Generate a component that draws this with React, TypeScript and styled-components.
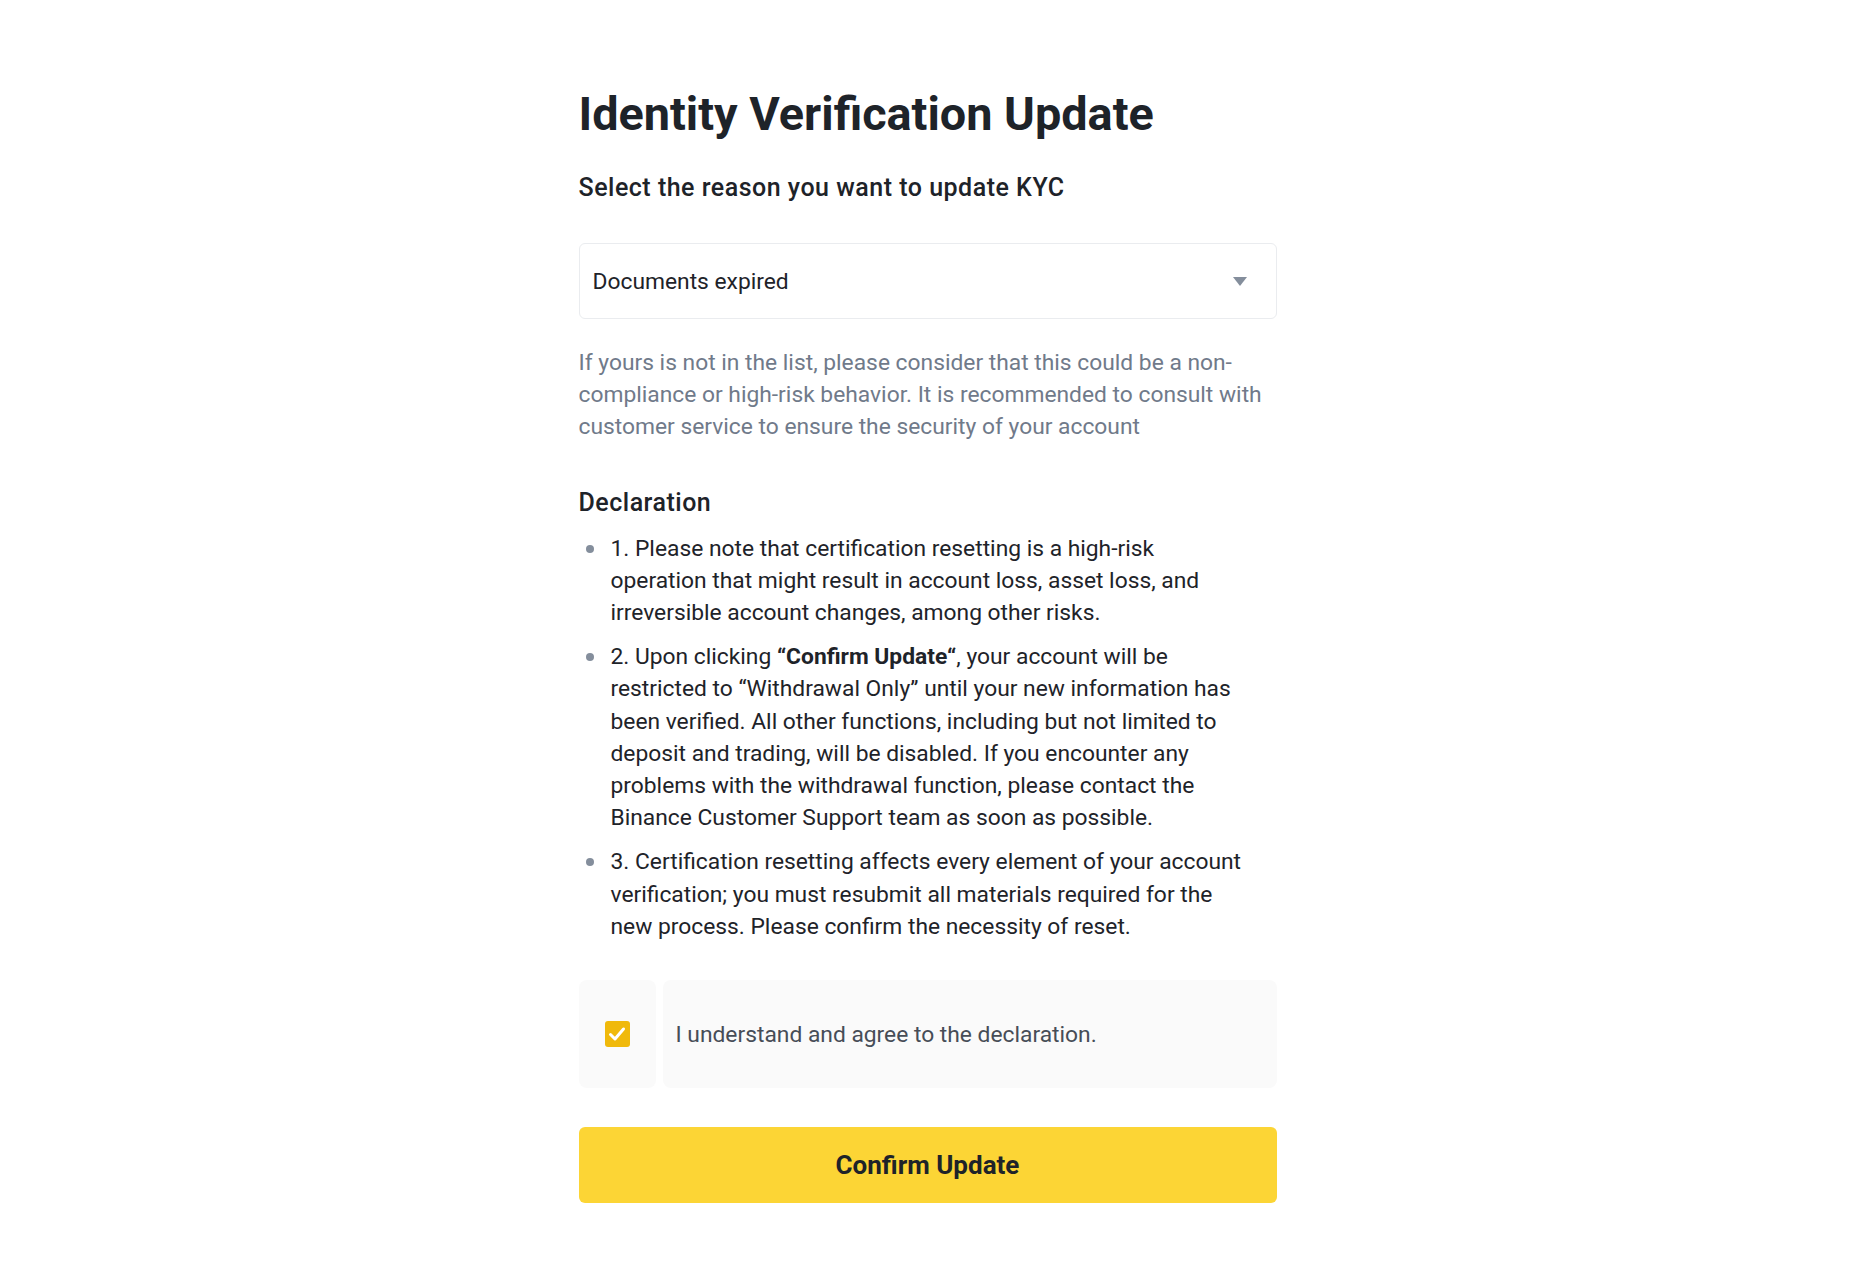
import React from "react";
import styled, { createGlobalStyle } from "styled-components";

const Global = createGlobalStyle`
  html, body { margin: 0; padding: 0; background: #ffffff; }
  body { font-family: Roboto, "Noto Sans", "Liberation Sans", sans-serif; color: #1E2329; }
`;

const Page = styled.div`
  display: flex;
  justify-content: center;
  padding: 86px 15px 60px 0;
`;

const Column = styled.div`
  width: 698px;
  display: flex;
  flex-direction: column;
`;

const Title = styled.h1`
  margin: 0;
  font-size: 46.8px;
  line-height: 56px;
  font-weight: 700;
  color: #1E2329;
`;

const Subtitle = styled.h2`
  margin: 30px 0 0;
  font-size: 25px;
  line-height: 32px;
  font-weight: 500;
  letter-spacing: 0.5px;
  color: #1E2329;
`;

const SelectBox = styled.div`
  margin-top: 39px;
  height: 76px;
  box-sizing: border-box;
  border: 1px solid #EAECEF;
  border-radius: 6px;
  display: flex;
  align-items: center;
  justify-content: space-between;
  padding: 0 29px 0 13px;
  font-size: 22.8px;
  color: #1E2329;
`;

const Hint = styled.p`
  margin: 28px 0 0;
  font-size: 22.8px;
  line-height: 32.2px;
  color: #707A8A;
`;

const SectionTitle = styled.h3`
  margin: 43px 0 0;
  font-size: 25px;
  line-height: 32px;
  font-weight: 500;
  letter-spacing: 0.5px;
  color: #1E2329;
`;

const List = styled.ul`
  margin: 14px 0 0;
  padding: 0;
  list-style: none;
  display: flex;
  flex-direction: column;
  gap: 12px;
`;

const Item = styled.li`
  position: relative;
  padding-left: 32px;
  padding-right: 28px;
  font-size: 22.8px;
  line-height: 32.2px;
  color: #1E2329;
  &::before {
    content: "";
    position: absolute;
    left: 7px;
    top: 12px;
    width: 8px;
    height: 8px;
    border-radius: 50%;
    background: #848E9C;
  }
`;

const Agree = styled.label`
  margin-top: 37px;
  display: flex;
  gap: 7px;
  height: 108px;
  cursor: pointer;
`;

const CheckCell = styled.div`
  width: 77px;
  flex: none;
  background: #FAFAFA;
  border-radius: 8px;
  display: flex;
  align-items: center;
  justify-content: center;
`;

const CheckBox = styled.span`
  width: 25px;
  height: 26px;
  border-radius: 3px;
  background: #F0B90B;
  display: flex;
  align-items: center;
  justify-content: center;
`;

const AgreeText = styled.div`
  flex: 1;
  background: #FAFAFA;
  border-radius: 8px;
  display: flex;
  align-items: center;
  padding-left: 13px;
  font-size: 22.8px;
  color: #474D57;
`;

const Button = styled.button`
  margin-top: 39px;
  height: 76px;
  border: none;
  border-radius: 6px;
  background: #FCD535;
  font-family: inherit;
  font-size: 26px;
  font-weight: 700;
  color: #1E2329;
  cursor: pointer;
`;

export default function App() {
  return (
    <>
      <Global />
      <Page>
        <Column>
          <Title>Identity Verification Update</Title>
          <Subtitle>Select the reason you want to update KYC</Subtitle>
          <SelectBox>
            <span>Documents expired</span>
            <svg width="14" height="9" viewBox="0 0 14 9">
              <path d="M0 0H14L7 9Z" fill="#848E9C" />
            </svg>
          </SelectBox>
          <Hint>
            If yours is not in the list, please consider that this could be a non-compliance or high-risk
            behavior. It is recommended to consult with customer service to ensure the security of your account
          </Hint>
          <SectionTitle>Declaration</SectionTitle>
          <List>
            <Item>
              1. Please note that certification resetting is a high-risk operation that might result in account
              loss, asset loss, and irreversible account changes, among other risks.
            </Item>
            <Item>
              2. Upon clicking <b>“Confirm Update“</b>, your account will be restricted to “Withdrawal Only” until
              your new information has been verified. All other functions, including but not limited to deposit
              and trading, will be disabled. If you encounter any problems with the withdrawal function, please
              contact the Binance Customer Support team as soon as possible.
            </Item>
            <Item>
              3. Certification resetting affects every element of your account verification; you must resubmit
              all materials required for the new process. Please confirm the necessity of reset.
            </Item>
          </List>
          <Agree>
            <CheckCell>
              <CheckBox>
                <svg width="18" height="16" viewBox="0 0 18 16">
                  <path d="M2.5 8.5L7 13L15.5 3" stroke="#fff" strokeWidth="3" fill="none" strokeLinecap="round" strokeLinejoin="round" />
                </svg>
              </CheckBox>
            </CheckCell>
            <AgreeText>I understand and agree to the declaration.</AgreeText>
          </Agree>
          <Button>Confirm Update</Button>
        </Column>
      </Page>
    </>
  );
}
